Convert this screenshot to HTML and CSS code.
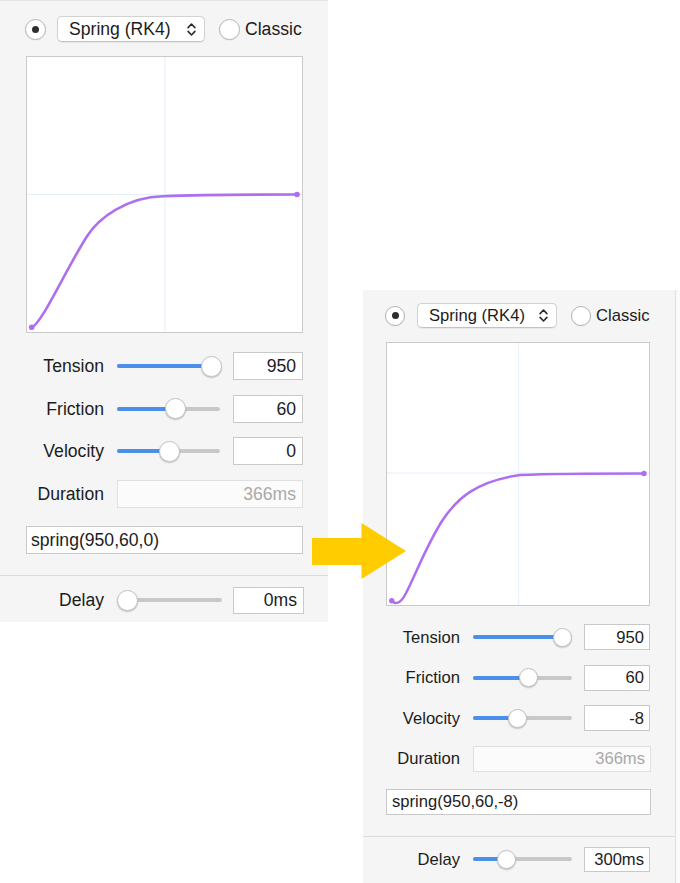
FILE: index.html
```html
<!DOCTYPE html>
<html>
<head>
<meta charset="utf-8">
<link rel="stylesheet" href="styles.css">
</head>
<body>
<div class="stage">
  <section class="panel panel--large">
    <div class="inner">
      <div class="header">
        <span class="radio radio--on"></span>
        <div class="select">
          <span class="txt">Spring (RK4)</span>
          <svg class="chev" viewBox="0 0 10 16"><path d="M1.8 6.2 L5 2.8 L8.2 6.2 M1.8 9.8 L5 13.2 L8.2 9.8" fill="none" stroke="#2a2a2a" stroke-width="1.5" stroke-linecap="round" stroke-linejoin="round"/></svg>
        </div>
        <span class="radio"></span>
        <span class="radio-label txt">Classic</span>
      </div>
      <div class="graph">
        <svg viewBox="0 0 275 275" width="275" height="275">
          <line x1="138" y1="0" x2="138" y2="275" stroke="#e4eefa" stroke-width="1"/>
          <line x1="0" y1="137.5" x2="275" y2="137.5" stroke="#e4eefa" stroke-width="1"/>
          <path d="M4.7,270.3 C14,268 38,214 59.7,179.7 C71.7,160.7 100,140 136,139.2 C170,138 200,137.5 270,137.5" fill="none" stroke="#ad6ff0" stroke-width="2.6" stroke-linecap="round"/>
          <circle cx="4.7" cy="270.3" r="2.8" fill="#ad6ff0"/>
          <circle cx="270" cy="137.5" r="2.8" fill="#ad6ff0"/>
        </svg>
      </div>
      <div class="rows">
        <div class="row">
          <span class="label txt">Tension</span>
          <div class="slider"><div class="track"><div class="fill" style="width:94px"></div></div><div class="thumb" style="left:94px"></div></div>
          <div class="field num"><span class="txt">950</span></div>
        </div>
        <div class="row">
          <span class="label txt">Friction</span>
          <div class="slider"><div class="track"><div class="fill" style="width:58.7px"></div></div><div class="thumb" style="left:58.7px"></div></div>
          <div class="field num"><span class="txt">60</span></div>
        </div>
        <div class="row">
          <span class="label txt">Velocity</span>
          <div class="slider"><div class="track"><div class="fill" style="width:52px"></div></div><div class="thumb" style="left:52px"></div></div>
          <div class="field num"><span class="txt">0</span></div>
        </div>
        <div class="row">
          <span class="label txt">Duration</span>
          <div class="field num disabled wide"><span class="txt">366ms</span></div>
        </div>
      </div>
      <div class="field expr"><span class="txt">spring(950,60,0)</span></div>
    </div>
    <div class="sep"></div>
    <div class="inner">
      <div class="row delay">
        <span class="label txt">Delay</span>
        <div class="slider"><div class="track"><div class="fill" style="width:0px"></div></div><div class="thumb" style="left:10.5px"></div></div>
        <div class="field num"><span class="txt">0ms</span></div>
      </div>
    </div>
  </section>

  <section class="panel panel--small">
    <div class="inner">
      <div class="header">
        <span class="radio radio--on"></span>
        <div class="select">
          <span class="txt">Spring (RK4)</span>
          <svg class="chev" viewBox="0 0 10 16"><path d="M1.8 6.2 L5 2.8 L8.2 6.2 M1.8 9.8 L5 13.2 L8.2 9.8" fill="none" stroke="#2a2a2a" stroke-width="1.5" stroke-linecap="round" stroke-linejoin="round"/></svg>
        </div>
        <span class="radio"></span>
        <span class="radio-label txt">Classic</span>
      </div>
      <div class="graph">
        <svg viewBox="0 0 262 262" width="262" height="262">
          <line x1="131.7" y1="0" x2="131.7" y2="262" stroke="#e4eefa" stroke-width="1"/>
          <line x1="0" y1="130" x2="262" y2="130" stroke="#e4eefa" stroke-width="1"/>
          <path d="M4.7,257.7 C8,261.5 13,261 18,252 C26,238 38,205 55,178 C70,155 90,138 133,132 C170,130.5 200,130.5 257,130.5" fill="none" stroke="#ad6ff0" stroke-width="2.5" stroke-linecap="round"/>
          <circle cx="4.7" cy="257.7" r="2.7" fill="#ad6ff0"/>
          <circle cx="257" cy="130.5" r="2.7" fill="#ad6ff0"/>
        </svg>
      </div>
      <div class="rows">
        <div class="row">
          <span class="label txt">Tension</span>
          <div class="slider"><div class="track"><div class="fill" style="width:90px"></div></div><div class="thumb" style="left:90px"></div></div>
          <div class="field num"><span class="txt">950</span></div>
        </div>
        <div class="row">
          <span class="label txt">Friction</span>
          <div class="slider"><div class="track"><div class="fill" style="width:56px"></div></div><div class="thumb" style="left:56px"></div></div>
          <div class="field num"><span class="txt">60</span></div>
        </div>
        <div class="row">
          <span class="label txt">Velocity</span>
          <div class="slider"><div class="track"><div class="fill" style="width:45px"></div></div><div class="thumb" style="left:45px"></div></div>
          <div class="field num"><span class="txt">-8</span></div>
        </div>
        <div class="row">
          <span class="label txt">Duration</span>
          <div class="field num disabled wide"><span class="txt">366ms</span></div>
        </div>
      </div>
      <div class="field expr"><span class="txt">spring(950,60,-8)</span></div>
    </div>
    <div class="sep"></div>
    <div class="inner">
      <div class="row delay">
        <span class="label txt">Delay</span>
        <div class="slider"><div class="track"><div class="fill" style="width:34px"></div></div><div class="thumb" style="left:34px"></div></div>
        <div class="field num"><span class="txt">300ms</span></div>
      </div>
    </div>
  </section>

  <svg class="arrow" viewBox="0 0 94 56" width="94" height="56">
    <polygon points="0,15 49.5,15 49.5,0 94,28 49.5,56 49.5,42 0,42" fill="#ffcc00"/>
  </svg>
</div>
</body>
</html>
```

FILE: styles.css
```css
html, body {
  margin: 0;
  padding: 0;
  background: #ffffff;
}

body {
  font-family: "Liberation Sans", Arial, Helvetica, sans-serif;
  color: #1c1c1c;
  width: 680px;
  height: 883px;
  overflow: hidden;
}

.stage {
  position: relative;
  display: flex;
  align-items: flex-start;
  width: 680px;
  height: 883px;
}

.panel {
  background: #f5f5f5;
  box-sizing: border-box;
  display: flex;
  flex-direction: column;
}

.txt {
  line-height: 1;
  padding-top: 2px;
}

/* ---------- large (left) panel ---------- */
.panel--large {
  width: 328px;
  height: 622px;
  border-top: 1px solid #e3e3e3;
  font-size: 17.6px;
  --radio: 21px;
  --sel-w: 148px;
  --sel-h: 26px;
  --graph: 277px;
  --label-w: 78px;
  --slider-w: 103px;
  --field-w: 70px;
  --row-h: 28px;
  --thumb: 21px;
}

.panel--large .inner { padding: 0 25px 0 26px; }
.panel--large .header { padding-top: 15px; height: 26px; }
.panel--large .header .radio:first-child { margin-left: -1px; margin-right: 11px; }
.panel--large .select { margin-right: 14px; padding: 0 7px 0 11px; }
.panel--large .radio-label { margin-left: 5px; }
.panel--large .graph { margin-top: 14px; }
.panel--large .rows { margin-top: 19px; gap: 14.5px; }
.panel--large .row { gap: 13px; }
.panel--large .field.num { padding-right: 6px; }
.panel--large .expr { margin-top: 18px; height: 28px; padding-left: 4px; }
.panel--large .sep { margin-top: 21px; }
.panel--large .delay { margin-top: 11px; height: 27px; gap: 13px; }
.panel--large .delay .field { width: 71px; margin-left: -2px; }
.panel--large .delay .slider { width: 105px; }

/* ---------- small (right) panel ---------- */
.panel--small {
  width: 313px;
  height: 593px;
  margin-left: 35px;
  margin-top: 290px;
  border-right: 1px solid #e0e0e0;
  box-shadow: 4px 0 0 #fafafa;
  font-size: 16.6px;
  --radio: 20px;
  --sel-w: 140px;
  --sel-h: 25px;
  --graph: 264px;
  --label-w: 74px;
  --slider-w: 99px;
  --field-w: 66px;
  --row-h: 26px;
  --thumb: 19px;
}

.panel--small .inner { padding: 0 24px 0 23px; }
.panel--small .header { padding-top: 13px; height: 25px; }
.panel--small .header .radio:first-child { margin-left: -1px; margin-right: 12px; }
.panel--small .select { margin-right: 14px; padding: 0 7px 0 11px; }
.panel--small .radio-label { margin-left: 5px; }
.panel--small .graph { margin-top: 14px; }
.panel--small .rows { margin-top: 18px; gap: 14.5px; }
.panel--small .row { gap: 12.5px; }
.panel--small .field.num { padding-right: 5px; }
.panel--small .expr { margin-top: 17px; height: 26px; padding-left: 5px; }
.panel--small .sep { margin-top: 21px; }
.panel--small .delay { margin-top: 10px; height: 25px; }

/* ---------- shared components ---------- */
.header {
  display: flex;
  align-items: center;
  box-sizing: content-box;
}

.radio {
  flex: none;
  width: var(--radio);
  height: var(--radio);
  box-sizing: border-box;
  border-radius: 50%;
  background: #ffffff;
  border: 1px solid #b5b5b5;
  box-shadow: 0 0.5px 1px rgba(0, 0, 0, 0.08);
  display: flex;
  align-items: center;
  justify-content: center;
}

.radio--on::after {
  content: "";
  width: 7px;
  height: 7px;
  border-radius: 50%;
  background: #2e2e2e;
}

.select {
  flex: none;
  width: var(--sel-w);
  height: var(--sel-h);
  box-sizing: border-box;
  display: flex;
  align-items: center;
  justify-content: space-between;
  background: #ffffff;
  border: 1px solid #d2d2d2;
  border-bottom-color: #c2c2c2;
  border-radius: 5px;
  box-shadow: 0 0.5px 1px rgba(0, 0, 0, 0.06);
}

.chev {
  width: 11px;
  height: 17px;
}

.radio-label {
  white-space: nowrap;
}

.graph {
  width: var(--graph);
  height: var(--graph);
  box-sizing: border-box;
  border: 1px solid #cacaca;
  background: #ffffff;
}

.graph svg {
  display: block;
}

.rows {
  display: flex;
  flex-direction: column;
}

.row {
  display: flex;
  align-items: center;
  height: var(--row-h);
}

.label {
  flex: none;
  width: var(--label-w);
  text-align: right;
  white-space: nowrap;
}

.slider {
  position: relative;
  flex: none;
  width: var(--slider-w);
  height: var(--thumb);
}

.track {
  position: absolute;
  left: 0;
  right: 0;
  top: 50%;
  height: 4px;
  margin-top: -2px;
  border-radius: 2px;
  background: #c8c8c8;
  overflow: hidden;
}

.fill {
  height: 100%;
  background: #4a90ea;
}

.thumb {
  position: absolute;
  top: 0;
  width: var(--thumb);
  height: var(--thumb);
  margin-left: calc(var(--thumb) / -2);
  box-sizing: border-box;
  border-radius: 50%;
  background: #ffffff;
  border: 0.5px solid #c4c4c4;
  box-shadow: 0 1px 1.5px rgba(0, 0, 0, 0.22);
}

.field {
  box-sizing: border-box;
  height: 100%;
  background: #ffffff;
  border: 1px solid #c9c9c9;
  display: flex;
  align-items: center;
  white-space: nowrap;
}

.field.num {
  flex: none;
  width: var(--field-w);
  justify-content: flex-end;
}

.field.wide {
  flex: 1;
  width: auto;
}

.field.disabled {
  color: #a9a9a9;
  border-color: #e0e0e0;
  background: #fbfbfb;
}

.expr {
  width: 100%;
}

.sep {
  height: 1px;
  background: #dcdcdc;
}

.arrow {
  position: absolute;
  left: 312px;
  top: 523px;
}
```
